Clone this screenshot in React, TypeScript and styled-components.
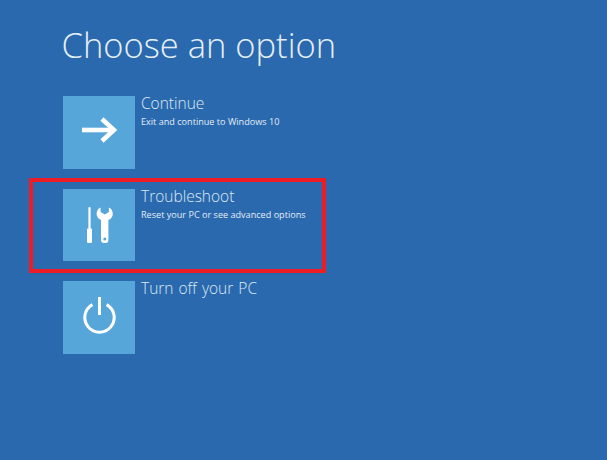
import React from "react";
import styled, { createGlobalStyle } from "styled-components";

const Global = createGlobalStyle`
  html, body { margin: 0; padding: 0; background: #2a69ae; }
  #root { width: 607px; height: 460px; overflow: hidden; }
`;

const Screen = styled.main`
  width: 607px;
  height: 460px;
  box-sizing: border-box;
  padding: 19.5px 0 0 62px;
  background: #2a69ae;
  color: #e9f1f8;
  font-family: "Open Sans", "Liberation Sans", sans-serif;
`;

const Title = styled.h1`
  margin: 0 0 26.5px -0.5px;
  font-size: 34.5px;
  line-height: 50px;
  font-weight: 300;
  color: #e6eff7;
`;

const List = styled.div`
  display: flex;
  flex-direction: column;
  gap: 20px;
`;

const Option = styled.div<{ $highlight?: boolean }>`
  position: relative;
  display: flex;
  gap: 6px;
  height: 72.5px;
  ${(p) =>
    p.$highlight &&
    `
    &::after {
      content: "";
      position: absolute;
      left: -33px;
      top: -11px;
      width: 289px;
      height: 87px;
      border: 4px solid #ee1c25;
    }
  `}
`;

const Tile = styled.div`
  flex: none;
  width: 72px;
  height: 72.5px;
  margin-left: 1px;
  display: flex;
  align-items: center;
  justify-content: center;
  background: #57a6da;
`;

const Copy = styled.div`
  display: flex;
  flex-direction: column;
  margin-top: -1px;
`;

const Heading = styled.div`
  font-size: 15.5px;
  line-height: 16px;
  font-weight: 300;
  word-spacing: 1px;
  color: #dfeaf4;
`;

const Sub = styled.div`
  margin-top: 4px;
  font-size: 9.1px;
  line-height: 13px;
  font-weight: 400;
  color: #e3edf6;
`;

const ArrowIcon = () => (
  <svg width="36" height="30" viewBox="0 0 36 30" fill="none">
    <path d="M1 13H33" stroke="#fff" strokeWidth="4.6" />
    <path d="M21 2 L33 13 L21 24" stroke="#fff" strokeWidth="4.6" />
  </svg>
);

const ToolsIcon = () => (
  <svg width="28" height="36" viewBox="-2 0 28 36" fill="#fff">
    <path d="M1.4 1.1 Q1.4 0 2.5 0 Q3.6 0 3.6 1.1 V22 H1.4 Z" />
    <path d="M0.8 21.5 H4.2 Q5 21.5 5 22.3 V35 Q5 36 4 36 H1 Q0 36 0 35 V22.3 Q0 21.5 0.8 21.5 Z" />
    <path
      fillRule="evenodd"
      d="M13.6 0.4 C11 1.6 9.6 4 9.6 6.8 C9.6 9.6 11.3 12 14 13.1 V33.6 Q14 36 16.4 36 H19 Q21.4 36 21.4 33.6 V13.1 C24.2 12 25.8 9.6 25.8 6.8 C25.8 4 24.4 1.6 21.9 0.4 V5 L17.8 7.6 L13.6 5 Z M17.8 30.6 a1.5 1.5 0 1 0 0.01 0 Z"
    />
  </svg>
);

const PowerIcon = () => (
  <svg width="33" height="40" viewBox="0 0 33 40" fill="none" stroke="#fff" strokeWidth="3">
    <path d="M16.5 0V18" />
    <path d="M9.4 7.6 A14.7 14.7 0 1 0 23.6 7.6" />
  </svg>
);

export default function App() {
  return (
    <Screen>
      <Global />
      <Title>Choose an option</Title>
      <List>
        <Option>
          <Tile><ArrowIcon /></Tile>
          <Copy>
            <Heading>Continue</Heading>
            <Sub>Exit and continue to Windows 10</Sub>
          </Copy>
        </Option>
        <Option $highlight>
          <Tile><ToolsIcon /></Tile>
          <Copy>
            <Heading>Troubleshoot</Heading>
            <Sub>Reset your PC or see advanced options</Sub>
          </Copy>
        </Option>
        <Option>
          <Tile><PowerIcon /></Tile>
          <Copy>
            <Heading>Turn off your PC</Heading>
          </Copy>
        </Option>
      </List>
    </Screen>
  );
}
